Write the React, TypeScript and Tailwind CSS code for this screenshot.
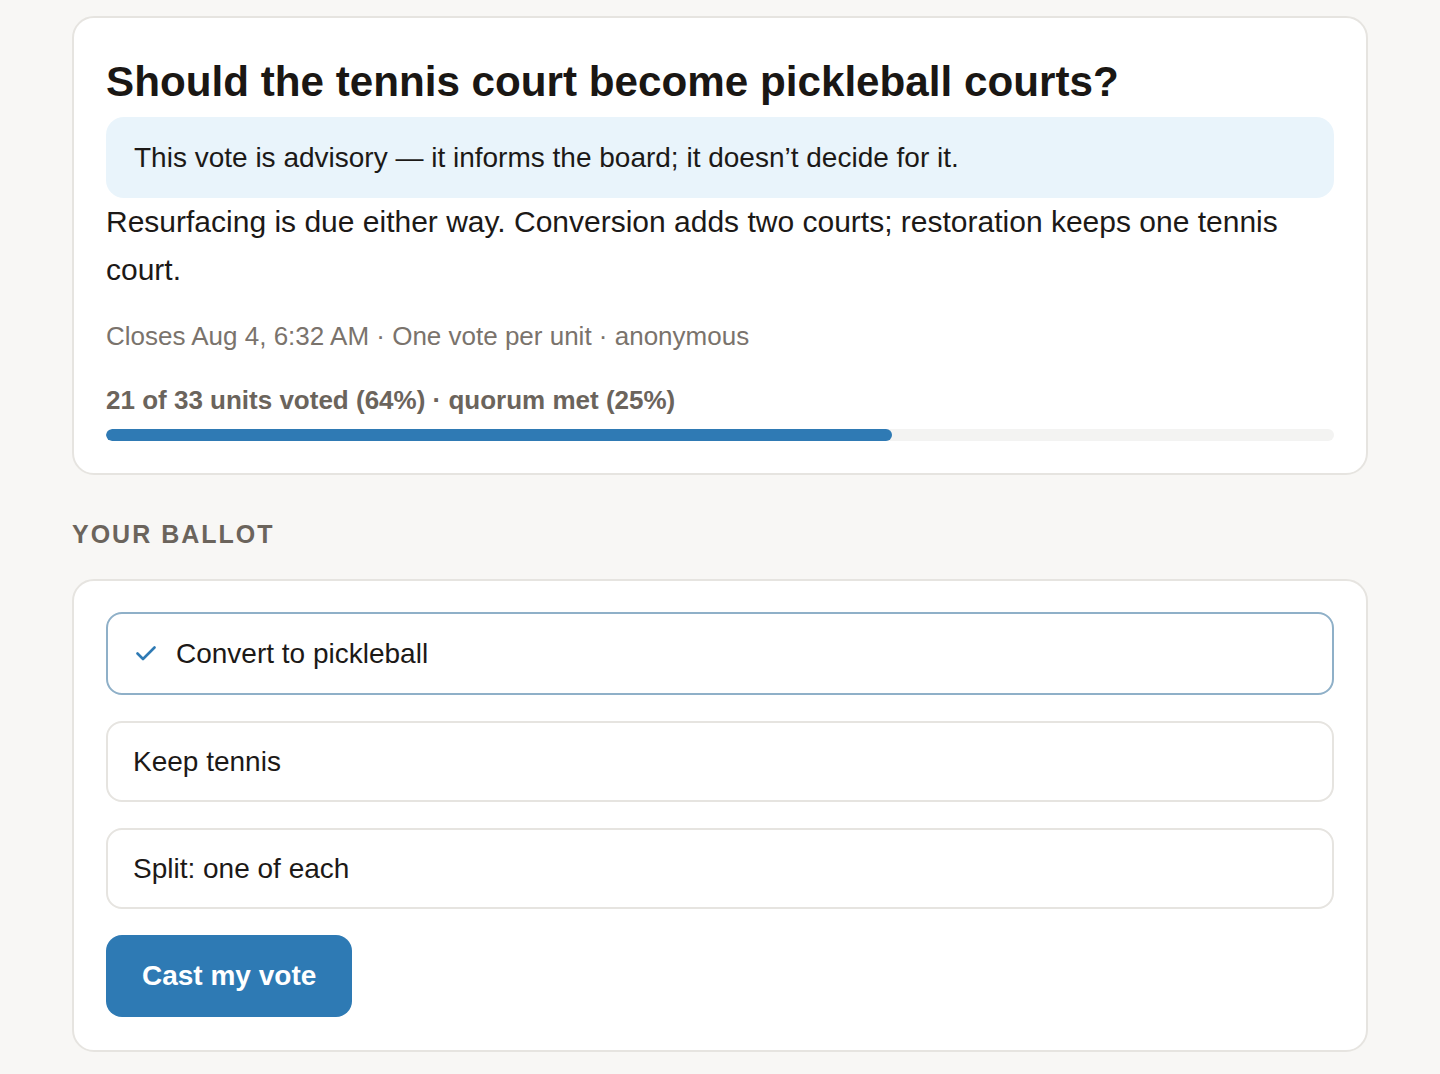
const options = [
  { id: 'convert', label: 'Convert to pickleball' },
  { id: 'keep', label: 'Keep tennis' },
  { id: 'split', label: 'Split: one of each' },
];

const CheckMark = () => (
  <svg width="20" height="15" viewBox="0 0 20 15" fill="none" className="shrink-0">
    <path
      d="M1.5 7.5 7 13 18.5 1.5"
      stroke="#2f7ab4"
      strokeWidth="2.6"
      strokeLinecap="round"
      strokeLinejoin="round"
    />
  </svg>
);

export default function App() {
  const selected = 'convert';
  const voted = 21;
  const total = 33;
  const pct = Math.round((voted / total) * 100);

  return (
    <div
      className="min-h-screen bg-[#f8f7f5] px-[72px] pt-[16px] pb-[22px] text-[#1c1917]"
      style={{ fontFamily: '"Liberation Sans", Arial, sans-serif' }}
    >
      <div className="rounded-[22px] border-2 border-[#e6e4e0] bg-white px-[32px] pt-[32px] pb-[32px]">
        <h1 className="pt-[3px] text-[42.2px] font-bold leading-[58px] text-[#1a1714]">
          Should the tennis court become pickleball courts?
        </h1>

        <div className="mt-[6px] rounded-[18px] bg-[#e9f4fb] px-[28px] py-[19px] text-[28px] leading-[43px]">
          This vote is advisory — it informs the board; it doesn’t decide for it.
        </div>

        <p className="text-[30px] leading-[48px]">
          Resurfacing is due either way. Conversion adds two courts; restoration keeps one tennis
          court.
        </p>

        <p className="mt-[23px] text-[26px] leading-[39px] text-[#7a736c]">
          Closes Aug 4, 6:32 AM · One vote per unit · anonymous
        </p>

        <p className="mt-[25px] text-[26px] font-bold leading-[39px] text-[#6b645c]">
          {voted} of {total} units voted ({pct}%) · quorum met (25%)
        </p>

        <div className="mt-[9px] h-[12px] w-full overflow-hidden rounded-full bg-[#f3f3f2]">
          <div className="h-full rounded-full bg-[#2f7ab4]" style={{ width: `${pct}%` }} />
        </div>
      </div>

      <h2 className="mt-[44px] text-[25px] font-bold uppercase leading-[30px] tracking-[0.08em] text-[#6b645c]">
        Your ballot
      </h2>

      <div className="mt-[30px] flex flex-col gap-[26px] rounded-[22px] border-2 border-[#e6e4e0] bg-white px-[32px] pt-[31px] pb-[33px]">
        {options.map((o) =>
          o.id === selected ? (
            <div
              key={o.id}
              className="flex h-[83px] items-center gap-[20px] rounded-[16px] border-2 border-[#8fb0c8] px-[28px] text-[28px]"
            >
              <CheckMark />
              <span>{o.label}</span>
            </div>
          ) : (
            <div
              key={o.id}
              className="flex h-[81px] items-center rounded-[16px] border-2 border-[#e6e4e0] px-[25px] text-[28px]"
            >
              {o.label}
            </div>
          ),
        )}

        <div>
          <button className="h-[82px] rounded-[16px] bg-[#2e7ab4] px-[36px] text-[28px] font-bold text-white">
            Cast my vote
          </button>
        </div>
      </div>
    </div>
  );
}
